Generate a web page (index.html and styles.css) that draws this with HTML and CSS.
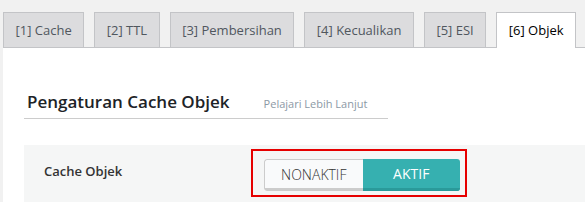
FILE: index.html
```html
<!DOCTYPE html>
<html>

<head>
    <meta charset="utf-8">
    <link rel="stylesheet" href="styles.css">
</head>

<body>
    <div class="tabs">
        <a class="tab" href="#cache">[1] Cache</a>
        <a class="tab" href="#ttl">[2] TTL</a>
        <a class="tab" href="#purge">[3] Pembersihan</a>
        <a class="tab" href="#excludes">[4] Kecualikan</a>
        <a class="tab" href="#esi">[5] ESI</a>
        <a class="tab active" href="#object">[6] Objek</a>
    </div>

    <div class="panel">
        <div class="section-title">
            <h3>Pengaturan Cache Objek</h3>
            <a class="learn-more" href="#docs">Pelajari Lebih Lanjut</a>
        </div>

        <div class="setting-row">
            <div class="setting-label">Cache Objek</div>
            <div class="highlight">
                <div class="switch">
                    <span class="switch-off">NONAKTIF</span>
                    <span class="switch-on">AKTIF</span>
                </div>
            </div>
        </div>
    </div>
</body>

</html>
```

FILE: styles.css
```css
body {
    margin: 0;
    background-color: #f1f1f1;
    font-family: "Open Sans", "Liberation Sans", sans-serif;
    width: 585px;
    height: 202px;
    overflow: hidden;
}

/* tab strip */
.tabs {
    display: flex;
    gap: 10px;
    padding: 12px 0 0 3px;
}

.tab {
    display: block;
    height: 34px;
    line-height: 34px;
    padding: 0 11.5px;
    background-color: #dcdcde;
    border: 1px solid #c3c4c7;
    border-bottom: none;
    color: #50575e;
    font-size: 13px;
    white-space: nowrap;
    text-decoration: none;
}

.tab.active {
    background-color: #fff;
    color: #000;
    margin-bottom: -1px;
    height: 35px;
    position: relative;
}

/* white settings panel */
.panel {
    background-color: #fff;
    border-top: 1px solid #c3c4c7;
    margin-left: 3px;
    padding: 0 0 0 21px;
    height: 154px;
    overflow: hidden;
}

.section-title {
    display: flex;
    align-items: baseline;
    gap: 34px;
    width: 361px;
    padding: 42px 0 5px 3px;
    border-bottom: 1px solid #ccc;
}

.section-title h3 {
    margin: 0;
    font-size: 17px;
    font-weight: 600;
    color: #1d2327;
}

.learn-more {
    color: #8c99a5;
    font-size: 11px;
    text-decoration: none;
}

.setting-row {
    display: flex;
    align-items: flex-start;
    background-color: #f5f6f6;
    margin-top: 26px;
    padding-top: 4px;
    height: 60px;
}

.setting-label {
    width: 207px;
    padding: 13px 0 0 20px;
    color: #333;
    font-size: 13px;
    font-weight: 600;
}

/* red annotation box around the switch */
.highlight {
    border: 2px solid #e60000;
    padding: 8px 5px 4px 11px;
}

.switch {
    display: flex;
    width: 196px;
    height: 32px;
    border-radius: 3px;
    overflow: hidden;
}

.switch span {
    flex: 1;
    display: flex;
    align-items: center;
    justify-content: center;
    font-size: 14px;
    box-sizing: border-box;
}

.switch-off {
    background-color: #f9fafb;
    color: #333;
    border: 1px solid #ccc;
    border-right: none;
    border-bottom: 3px solid #ccc;
    border-radius: 3px 0 0 3px;
    font-weight: 300;
}

.switch-on {
    background-color: #36b0b0;
    color: #fff;
    border-bottom: 3px solid #2a9a9a;
}
```
